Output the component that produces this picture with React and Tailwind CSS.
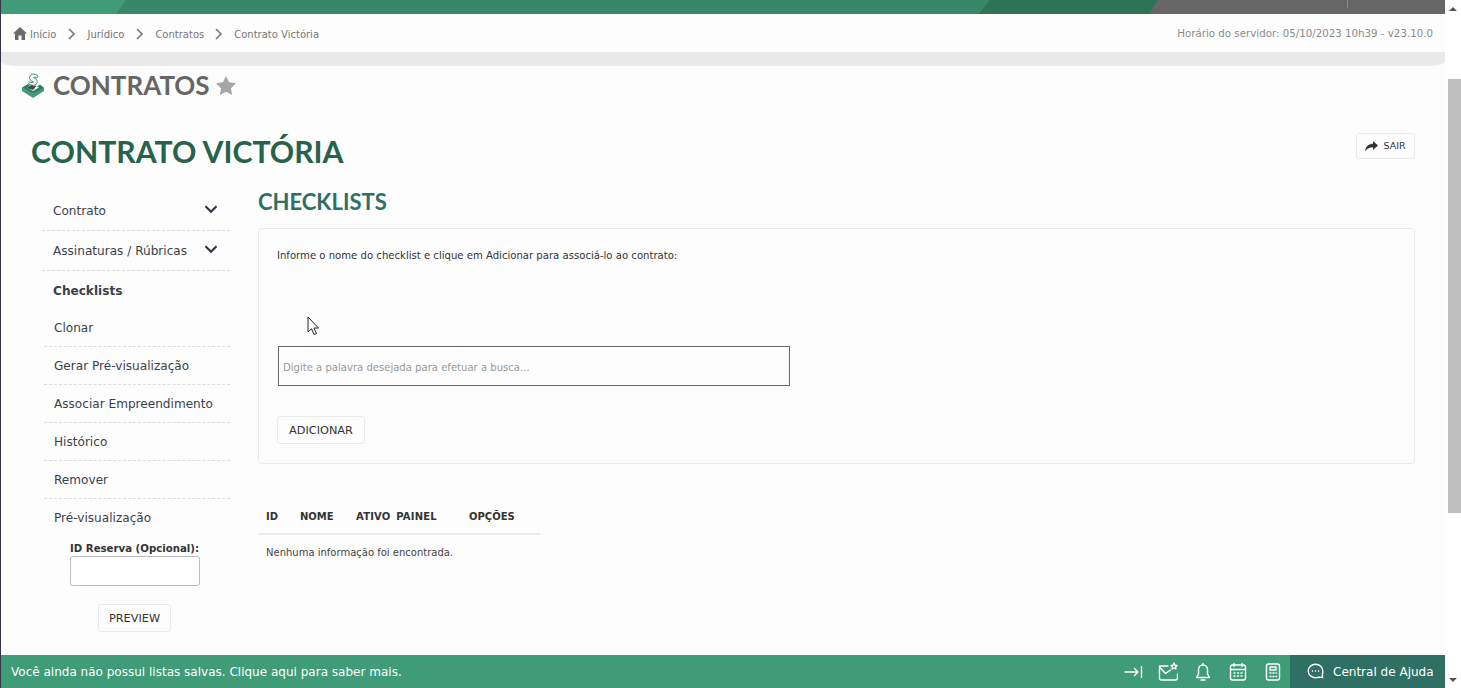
const verdana = "font-['DejaVu_Sans',sans-serif]"

const Chevron = () => (
  <svg width="14" height="14" viewBox="0 0 14 14" fill="none" stroke="#2f3542" strokeWidth="2.2" className="shrink-0 -mt-[4px]">
    <path d="M1.5 4.2 7 9.7l5.5-5.5" />
  </svg>
)

const Crumb = () => (
  <svg width="10" height="14" viewBox="0 0 10 14" fill="none" stroke="#777" strokeWidth="1.6" className="shrink-0">
    <path d="M2 2l5 5-5 5" />
  </svg>
)

const Logo = () => (
  <svg width="24" height="25" viewBox="0 0 24 25" className="shrink-0">
    <path d="M1 14.500 12 21l11-6.500V18L12 25 1 18z" fill="#3f9b78" />
    <path d="M1 14.500 7 11l2 2-3 1.500 6 3.500 6-3.500-2-1 3-2 4 3.500L12 21z" fill="#2f7d60" />
    <path d="M9 2.500 12 1l3 .5 2 1.500-1 2-2-1-1.500.5 3 2 1 2.500-1.500 2.500-2.500.7-1 1.300-1-1.300-3-1 1-2.500 2.500 1 1.500-.5-3-2L8.500 5z" fill="#fff" stroke="#3f9b78" strokeWidth="1" />
    <path d="M6 15l5-3.500 1.500 1.500 3-.5-2 3-1.500 1.500z" fill="#4a4a4a" />
  </svg>
)

const SideLink = ({ children, bold, dashed, chevron, indent }) => (
  <div className={`flex items-center justify-between ${indent ? "h-[38px] pl-[10px] ml-[2px]" : "h-10 pl-[11px]"} pr-3 text-[12.100px] ${bold ? "font-bold -mb-[2px]" : ""} ${dashed ? "border-b border-dashed border-[#dddddd] pt-[1px]" : ""} text-[#3a3f4a]`}>
    <span>{children}</span>
    {chevron && <Chevron />}
  </div>
)

const OutlineButton = ({ children, className = "" }) => (
  <button className={`h-7 pt-[2px] border border-[#ebebeb] rounded-[3px] bg-[#fdfdfd] text-[11.300px] text-[#333] ${className}`}>{children}</button>
)

const FooterIcon = ({ children }) => (
  <svg width="20" height="20" viewBox="0 0 20 20" fill="none" stroke="#fff" strokeWidth="1.4" strokeLinecap="round" strokeLinejoin="round" className="shrink-0 mt-[1px]">
    {children}
  </svg>
)

export default function App() {
  return (
    <div className={`${verdana} h-[688px] w-[1461px] flex overflow-hidden bg-[#fdfdfd] border-l border-[#2f3542]`}>
      <div className="flex-1 min-w-0 flex flex-col">
        <div className="h-[14px] shrink-0 flex bg-[#666666] relative">
          <div className="w-[125px] bg-[#3f9b78] [clip-path:polygon(0_0,100%_0,calc(100%-10px)_100%,0_100%)] -mr-[10px] z-30"></div>
          <div className="w-[874px] bg-[#388768] [clip-path:polygon(0_0,100%_0,calc(100%-11px)_100%,0_100%)] -mr-[11px] z-20"></div>
          <div className="w-[179px] bg-[#2f7357] [clip-path:polygon(0_0,100%_0,calc(100%-9px)_100%,0_100%)] z-10"></div>
          <span className="absolute left-[1346px] top-0 h-2 w-px bg-[#8a8a8a]"></span>
        </div>

        <div className="h-[38px] shrink-0 flex items-center justify-between pl-3 pr-[12px] text-[10px] text-[#777]">
          <div className="flex items-center mt-[2px]">
            <svg width="14" height="13" viewBox="0 0 14 13" fill="#6a6a6a" className="mr-[3px] -mt-[2px]">
              <path d="M7 0 0 6.500h2V13h3.500V8.500h3V13H12V6.500h2L7 0z" />
            </svg>
            <span>Início</span>
            <span className="mx-[10.500px]"><Crumb /></span>
            <span>Jurídico</span>
            <span className="mx-[10.500px]"><Crumb /></span>
            <span>Contratos</span>
            <span className="mx-[10px]"><Crumb /></span>
            <span>Contrato Victória</span>
          </div>
          <span className="text-[10.250px] text-[#8a8a8a] mt-[2px]">Horário do servidor: 05/10/2023 10h39 - v23.10.0</span>
        </div>

        <div className="h-[14px] shrink-0 bg-[#e9e9e9] rounded-b-[14px_5px]"></div>

        <div className="flex-1 min-h-0 flex flex-col pl-[20px]">
          <div className="h-[38px] shrink-0 flex items-center font-['Lato',sans-serif] font-bold text-[26px] text-[#666666]">
            <Logo />
            <span className="ml-2">CONTRATOS</span>
            <svg width="20" height="19" viewBox="0 0 24 23" fill="#a5a5a5" className="ml-[6px]">
              <path d="M12 0l3.700 7.600 8.300 1.200-6 5.900 1.400 8.300L12 19l-7.400 4L6 14.700 0 8.800l8.300-1.200z" />
            </svg>
          </div>

          <div className="flex items-start justify-between pl-[10px] pr-[30px] mt-[9px] h-[77px] shrink-0">
            <h1 className="font-['Lato',sans-serif] font-bold text-[30.200px] leading-[40px] mt-[18px] text-[#27634a]">CONTRATO VICTÓRIA</h1>
            <button className="h-[26px] w-[59px] mt-[20px] pt-[1px] flex items-center justify-center gap-[5px] border border-[#ebebeb] rounded-[3px] text-[9.500px] text-[#333]">
              <svg width="13" height="11" viewBox="0 0 13 11" fill="#333"><path d="M8 0l5 4.500L8 9V6.300C4.500 6.300 2 7.300 0 10.500 .5 6 3 2.800 8 2.700z" /></svg>
              SAIR
            </button>
          </div>

          <div className="flex-1 min-h-0 flex pl-[21px] pr-[30px] mt-[1px]">
            <aside className="w-[188px] shrink-0">
              <SideLink dashed chevron>Contrato</SideLink>
              <SideLink dashed chevron>Assinaturas / Rúbricas</SideLink>
              <SideLink bold>Checklists</SideLink>
              <SideLink indent dashed>Clonar</SideLink>
              <SideLink indent dashed>Gerar Pré-visualização</SideLink>
              <SideLink indent dashed>Associar Empreendimento</SideLink>
              <SideLink indent dashed>Histórico</SideLink>
              <SideLink indent dashed>Remover</SideLink>
              <SideLink indent>Pré-visualização</SideLink>
              <div className="pl-[28px] flex flex-col items-start">
                <label className="text-[10.200px] font-bold text-[#333] leading-[14px] mt-[5px]">ID Reserva (Opcional):</label>
                <input className="w-[130px] h-[30px] border border-[#bbbbbb] rounded-[3px] bg-white" />
                <OutlineButton className="mt-[18px] ml-[28px] w-[73px]">PREVIEW</OutlineButton>
              </div>
            </aside>

            <main className="flex-1 min-w-0 ml-[28px] -mt-[6px]">
              <h2 className="font-['Lato',sans-serif] font-bold text-[22px] leading-[30px] text-[#2f6f64] mt-[2px]">CHECKLISTS</h2>
              <div className="mt-[11px] h-[236px] border border-[#ebebeb] rounded-[4px] pl-[18px] pt-[20px]">
                <p className="text-[10.100px] leading-[14px] text-[#333]">Informe o nome do checklist e clique em Adicionar para associá-lo ao contrato:</p>
                <input placeholder="Digite a palavra desejada para efetuar a busca..." className="block mt-[83px] ml-px w-[512px] h-10 border border-[#666666] pl-[4px] pt-[2px] text-[10.070px] placeholder:text-[#9a9a9a] bg-transparent" />
                <OutlineButton className="mt-[30px] w-[88px]">ADICIONAR</OutlineButton>
              </div>
              <div className="mt-[36px] w-[282px] text-[10px]">
                <div className="flex h-[35px] items-center pl-2 font-bold text-[#333] border-b-2 border-[#ebebeb]">
                  <span className="w-[34px]">ID</span>
                  <span className="w-[56px]">NOME</span>
                  <span className="w-[113px] tracking-[0.2px] [word-spacing:2px]">ATIVO PAINEL</span>
                  <span>OPÇÕES</span>
                </div>
                <p className="pl-2 mt-[10px] text-[#444]">Nenhuma informação foi encontrada.</p>
              </div>
            </main>
          </div>
        </div>

        <div className="h-[33px] shrink-0 flex items-center justify-between bg-[#3f9b78] text-white text-[12.030px]">
          <span className="pl-[10px] pt-[2px]">Você ainda não possui listas salvas. Clique aqui para saber mais.</span>
          <div className="flex items-center h-full">
            <div className="flex items-center gap-[15px] pr-[7px]">
              <FooterIcon><path d="M2 10h13M11.500 6.500 15 10l-3.500 3.500M18.500 4.500v11" /></FooterIcon>
              <FooterIcon><path d="M10 4H1.500v12a2 2 0 0 0 2 2h14a2 2 0 0 0 2-2v-4M1.500 5l6 6.500 5-3.500" /><path d="M16 1l1 2.200 2 .3-1.500 1.500.4 2L16 6l-1.900 1 .4-2L13 3.500l2-.3z" /></FooterIcon>
              <FooterIcon><path d="M10 3a4.500 4.500 0 0 0-4.500 4.500V12L3.500 15.500h13L14.500 12V7.500A4.500 4.500 0 0 0 10 3zM8 18h4M10 1.500V3" /></FooterIcon>
              <FooterIcon><rect x="2.500" y="3" width="15" height="15" rx="2" /><path d="M2.500 7.500h15M6 1.500v3M14 1.500v3M6 11h1M9.500 11h1M13 11h1M6 14h1M9.500 14h1M13 14h1" /></FooterIcon>
              <FooterIcon><rect x="3.500" y="2" width="13" height="16" rx="2" /><path d="M7 5h6v3H7zM7 11h1M10 11h1M13 11h.5M7 14.500h1M10 14.500h1M13 14.500h.5" /></FooterIcon>
            </div>
            <div className="h-full w-[155px] flex items-center pl-[17px] bg-[#2f6f64] gap-[9px]">
              <svg width="17" height="17" viewBox="0 0 17 17" fill="none" stroke="#fff" strokeWidth="1.4" className="shrink-0">
                <path d="M8.500 1.200c4.200 0 7.300 3 7.300 6.800 0 2.200-.8 4-.3 6.500-2-.2-3.200-.4-4.500-.2-.8.300-1.700.4-2.500.4-4.100 0-7.300-3-7.300-6.700s3.200-6.800 7.300-6.800z" />
                <path d="M4.800 8h1.200M7.900 8h1.200M11 8h1.200" strokeWidth="1.600" />
              </svg>
              <span className="pt-[2px]">Central de Ajuda</span>
            </div>
          </div>
        </div>
      </div>

      <div className="w-[16px] shrink-0 flex flex-col items-center justify-between bg-white">
        <div className="w-full flex flex-col items-center">
          <div className="h-[18px] flex items-center justify-center">
            <span className="w-0 h-0 border-x-[4px] border-x-transparent border-b-[4px] border-b-[#555]"></span>
          </div>
          <div className="mt-[61px] h-[434px] w-[13px] ml-[3px] bg-[#bfbfbf]"></div>
        </div>
        <div className="h-[17px] flex items-center justify-center">
          <span className="w-0 h-0 border-x-[4px] border-x-transparent border-t-[4px] border-t-[#555]"></span>
        </div>
      </div>

      <svg width="13" height="20" viewBox="0 0 13 20" className="absolute left-[307px] top-[316px]" fill="#fff" stroke="#222" strokeWidth="1">
        <path d="M1 1v15l3.500-3.200L7 18.500l2.500-1-2.500-5.500h4.500z" />
      </svg>
    </div>
  )
}
